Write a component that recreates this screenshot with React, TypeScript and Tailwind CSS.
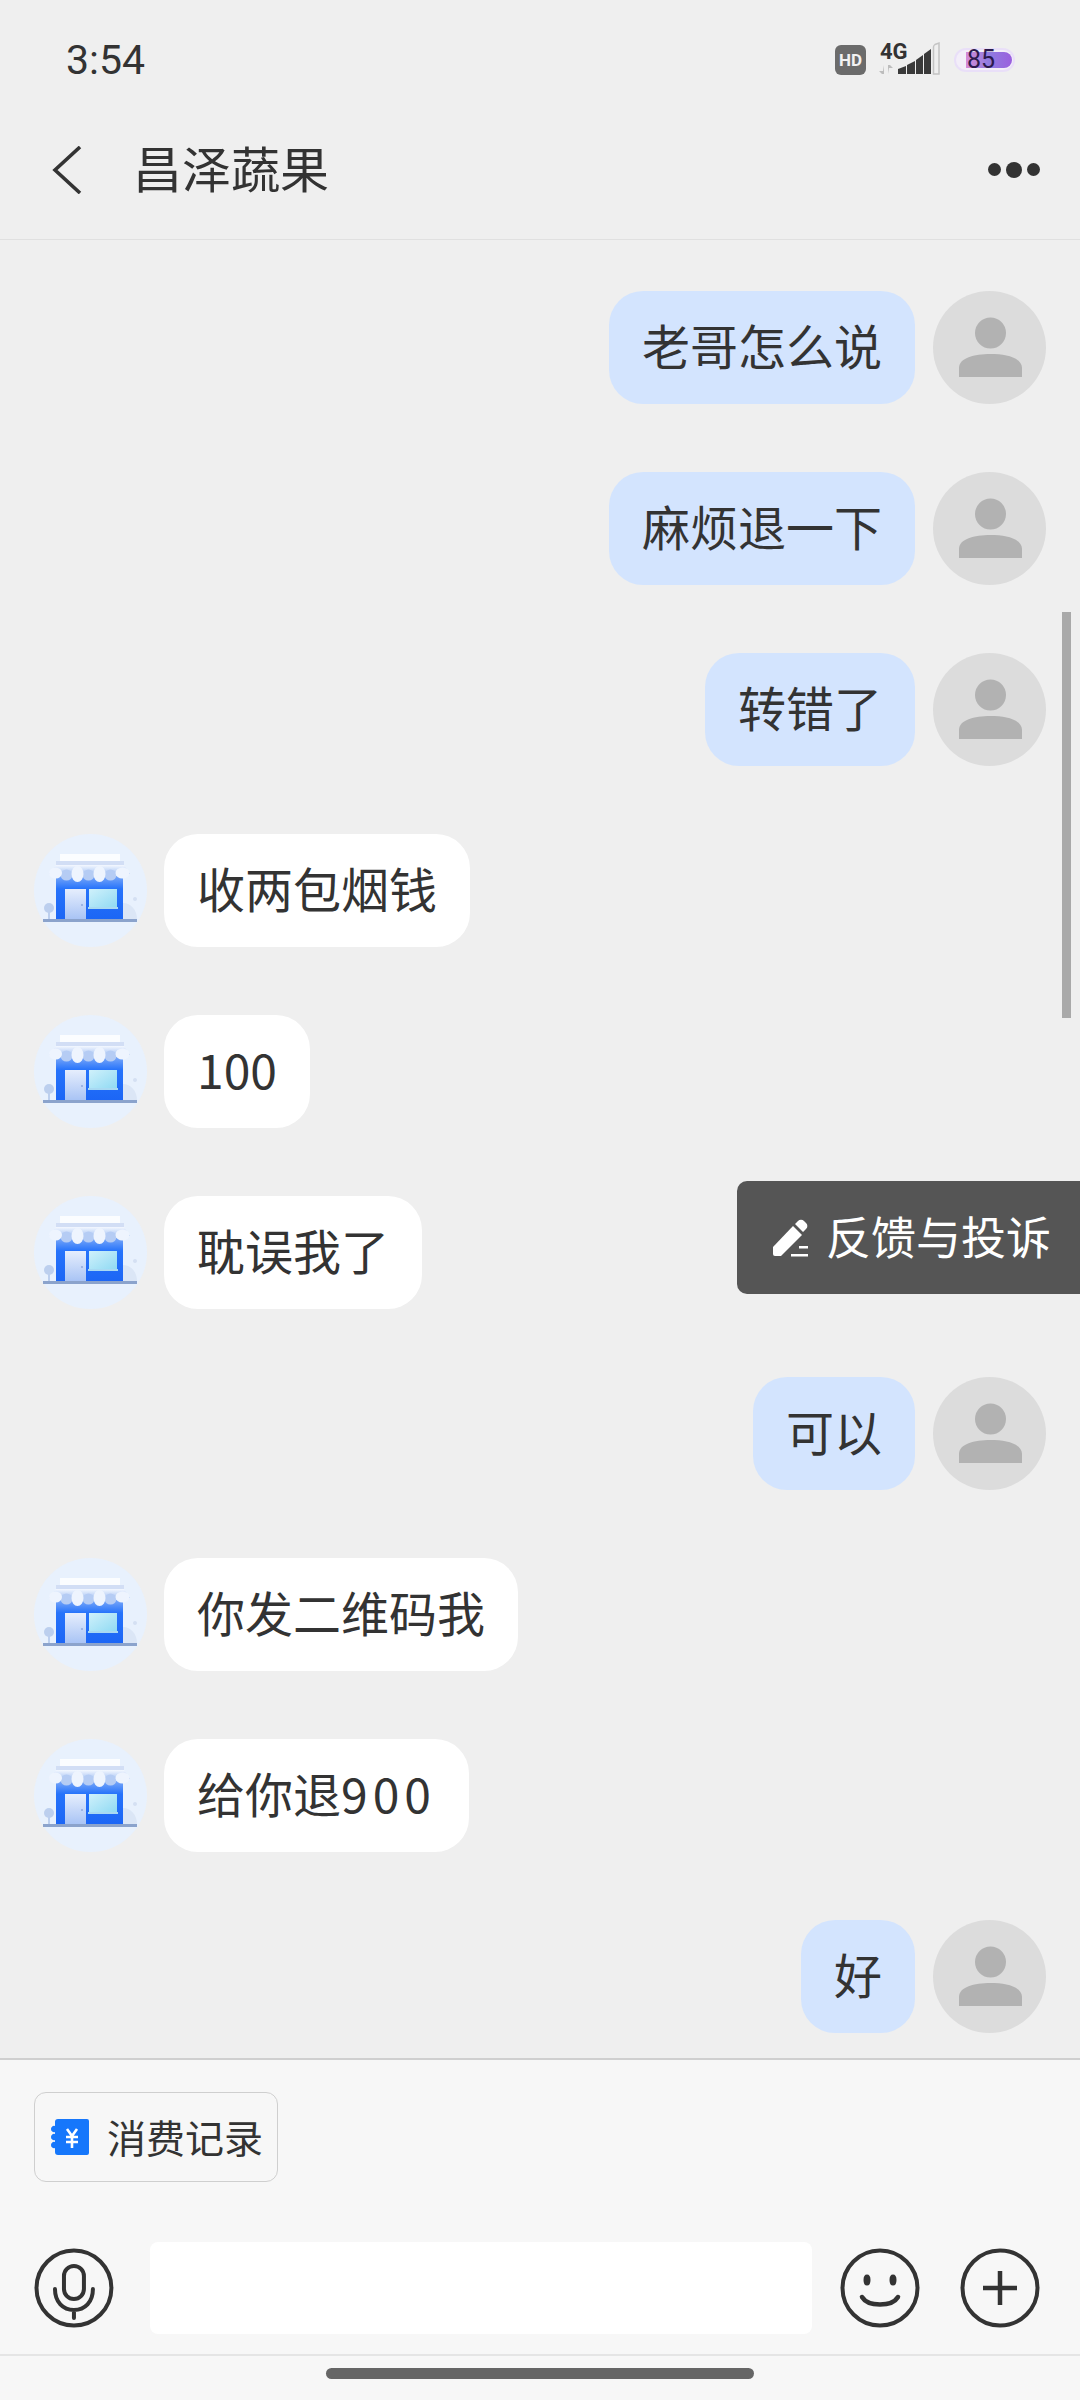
type Message = { from: 'me' | 'shop'; text: string; digits?: string }

const messages: Message[] = [
  { from: 'me', text: '老哥怎么说' },
  { from: 'me', text: '麻烦退一下' },
  { from: 'me', text: '转错了' },
  { from: 'shop', text: '收两包烟钱' },
  { from: 'shop', text: '100' },
  { from: 'shop', text: '耽误我了' },
  { from: 'me', text: '可以' },
  { from: 'shop', text: '你发二维码我' },
  { from: 'shop', text: '给你退', digits: '900' },
  { from: 'me', text: '好' },
]

function UserAvatar() {
  return (
    <svg viewBox="0 0 113 113" className="h-[113px] w-[113px] shrink-0">
      <circle cx="56.5" cy="56.5" r="56.5" fill="#dcdcdc" />
      <circle cx="57.5" cy="42" r="15.5" fill="#b2b2b2" />
      <path d="M26 86 V77 C26 67 41 63 57.5 63 C74 63 89 67 89 77 V86 Z" fill="#b2b2b2" />
    </svg>
  )
}

function ShopAvatar() {
  return (
    <svg viewBox="0 0 113 113" className="h-[113px] w-[113px] shrink-0">
      <defs>
        <linearGradient id="front" x1="0" y1="0" x2="0" y2="1">
          <stop offset="0" stopColor="#7aa8f8" />
          <stop offset="0.3" stopColor="#2673fb" />
          <stop offset="1" stopColor="#1c66f5" />
        </linearGradient>
        <linearGradient id="door" x1="0" y1="0" x2="0" y2="1">
          <stop offset="0" stopColor="#e6eefd" />
          <stop offset="1" stopColor="#a9c4f5" />
        </linearGradient>
        <linearGradient id="pane" x1="0" y1="0" x2="1" y2="1">
          <stop offset="0" stopColor="#d0f1fb" />
          <stop offset="1" stopColor="#90daf3" />
        </linearGradient>
        <linearGradient id="awning" x1="0" y1="0" x2="0" y2="1">
          <stop offset="0" stopColor="#f4f8ff" />
          <stop offset="1" stopColor="#a9c5f4" />
        </linearGradient>
      </defs>
      <circle cx="56.5" cy="56.5" r="56.5" fill="#e8f1fd" />
      <path d="M89 85 V69 C97 69 103 76 103 85 Z" fill="#dbe6f6" />
      <circle cx="101" cy="65" r="2" fill="#d4e0f3" />
      <circle cx="15" cy="74" r="5" fill="#bccfee" />
      <rect x="14" y="76" width="2" height="9" fill="#bccfee" />
      <rect x="22" y="42" width="67" height="43" fill="url(#front)" />
      <rect x="31" y="55" width="21" height="30" fill="url(#door)" />
      <circle cx="48" cy="71" r="1" fill="#8fa9dc" />
      <rect x="55" y="55" width="28" height="18" fill="url(#pane)" />
      <rect x="54" y="73" width="30" height="2" fill="#a8d9f2" />
      <rect x="26" y="20" width="60" height="7" fill="#fbfdff" />
      <rect x="22" y="27" width="68" height="4" fill="#d2def5" />
      {/* scalloped awning: blue lobes behind, white lobes in front */}
      <path d="M22 31 H90 L96 40 H15 Z" fill="url(#awning)" />
      <ellipse cx="32.5" cy="41" rx="6" ry="5.5" fill="#b5ccf4" />
      <ellipse cx="54.5" cy="41" rx="6" ry="5.5" fill="#b5ccf4" />
      <ellipse cx="76.5" cy="41" rx="6" ry="5.5" fill="#b5ccf4" />
      <ellipse cx="21.5" cy="39" rx="6.5" ry="5.5" fill="#eef4fe" />
      <ellipse cx="43.5" cy="40" rx="6" ry="8" fill="#eef4fe" />
      <ellipse cx="65.5" cy="40" rx="6" ry="8" fill="#eef4fe" />
      <ellipse cx="88.5" cy="39" rx="7" ry="5.5" fill="#eef4fe" />
      <rect x="9" y="85" width="94" height="3" fill="#8ba3cc" />
    </svg>
  )
}

function Bubble({ from, text, digits }: Message) {
  const tone = from === 'me' ? 'bg-[#d3e4fe]' : 'bg-white'
  return (
    <div className={`flex h-[113px] items-center rounded-[34px] px-[33px] pb-[8px] text-[48px] leading-none text-[#333] ${tone}`}>
      {text}
      {digits && <span className="tracking-[5px]">{digits}</span>}
    </div>
  )
}

function StatusIcons() {
  return (
    <div className="flex items-center">
      <div className="flex h-[30px] w-[31px] items-center justify-center rounded-[6px] bg-[#6b6b6b] font-['Roboto',sans-serif] text-[17px] font-bold leading-none text-[#f2f2f2]">
        HD
      </div>
      <div className="relative ml-[13px] h-[34px] w-[62px]">
        <span className="absolute left-[1px] top-[-2px] font-['Roboto',sans-serif] text-[22px] font-bold leading-[22px] text-[#333]">4G</span>
        <svg viewBox="0 0 62 34" className="absolute inset-0 h-[34px] w-[62px] overflow-visible">
          <path d="M5 22 V31 H3 L0 28 H4 Z M9 31 V22 H11 L14 25 H10 Z" fill="#bdbdbd" />
          <path d="M19 31 V26 L27 23 V31 Z" fill="#3a3a3a" />
          <path d="M28 31 V22 L36 18 V31 Z" fill="#3a3a3a" />
          <path d="M37 31 V17 L44 12 V31 Z" fill="#3a3a3a" />
          <path d="M45 31 V11 L52 6 V31 Z" fill="#3a3a3a" />
          <path d="M54.5 31 V4 Q54.5 2.5 56 1.5 L60 0 V31 Z" fill="#efefef" stroke="#c4c4c4" strokeWidth="1.5" />
        </svg>
      </div>
      <div className="relative ml-[13px] h-[24px] w-[61px] rounded-full border-[2px] border-[#e9dff8] bg-[#f3eef9]">
        <div className="absolute bottom-[2px] left-[10px] top-[2px] w-[46px] rounded-r-full bg-gradient-to-r from-[#d98bd6] via-[#8f7be0] to-[#9a5fde]" />
        <span className="absolute left-[11px] top-[-2px] font-['Roboto',sans-serif] text-[25px] leading-[24px] text-[#2c1a4d]">85</span>
      </div>
    </div>
  )
}

function FeedbackTab() {
  return (
    <div className="absolute right-0 top-[941px] flex h-[113px] w-[343px] items-center rounded-l-[10px] bg-[#555] pl-[34px] text-white">
      <svg viewBox="0 0 38 38" className="h-[38px] w-[38px]" fill="#fff">
        <path d="M2 28 L22 7 L31 16 L10 37 H4 a2 2 0 0 1 -2 -2 Z" />
        <path d="M24 5 L27 2 a4 4 0 0 1 6 0 l2 2 a4 4 0 0 1 0 6 l-3 3 Z" />
        <rect x="20" y="35" width="17" height="2.5" />
        <rect x="28" y="27" width="9" height="2.5" />
      </svg>
      <span className="ml-[17px] pb-[4px] text-[45px] leading-none">反馈与投诉</span>
    </div>
  )
}

function RecordIcon() {
  return (
    <svg viewBox="0 0 40 38" className="h-[38px] w-[40px]">
      <path d="M5 4 a3 3 0 0 1 3 -3 H37 a2 2 0 0 1 2 2 V35 a2 2 0 0 1 -2 2 H8 a3 3 0 0 1 -3 -3 V30 a3 3 0 0 1 -4 -3 a3 3 0 0 1 4 -3 V22 a3 3 0 0 1 -4 -3 a3 3 0 0 1 4 -3 V14 a3 3 0 0 1 -4 -3 a3 3 0 0 1 4 -3 Z" fill="#1677fb" />
      <path d="M17 11 L22 18 L27 11 M16 19 H28 M16 24 H28 M22 18 V30" fill="none" stroke="#fff" strokeWidth="2.6" />
    </svg>
  )
}

function MicIcon() {
  return (
    <svg viewBox="0 0 80 80" className="h-[80px] w-[80px]" fill="none" stroke="#333" strokeWidth="4">
      <circle cx="40" cy="40" r="37.5" />
      <rect x="30" y="18" width="20" height="33" rx="10" />
      <path d="M21 41 C21 54 29 62 40 62 C51 62 59 54 59 41 M40 62 V70" strokeLinecap="round" />
    </svg>
  )
}

function SmileIcon() {
  return (
    <svg viewBox="0 0 80 80" className="h-[80px] w-[80px]" fill="none" stroke="#333" strokeWidth="4">
      <circle cx="40" cy="40" r="37.5" />
      <ellipse cx="27" cy="32" rx="1.5" ry="3.5" fill="#333" />
      <ellipse cx="53" cy="32" rx="1.5" ry="3.5" fill="#333" />
      <path d="M22 49 C28 59 52 59 58 49" strokeWidth="4.5" strokeLinecap="round" />
    </svg>
  )
}

function PlusIcon() {
  return (
    <svg viewBox="0 0 80 80" className="h-[80px] w-[80px]" fill="none" stroke="#333" strokeWidth="4">
      <circle cx="40" cy="40" r="37.5" />
      <path d="M23 40 H57 M40 23 V57" strokeWidth="4.5" />
    </svg>
  )
}

export default function App() {
  return (
    <div className="flex h-[2400px] w-[1080px] flex-col overflow-hidden bg-[#efefef] font-['Noto_Sans_CJK_SC',sans-serif] text-[#333]">
      <div className="flex h-[120px] items-center justify-between pl-[66px] pr-[65px]">
        <span className="font-['Roboto',sans-serif] text-[41px] font-normal leading-none text-[#333]">3:54</span>
        <StatusIcons />
      </div>

      <header className="flex h-[120px] items-center justify-between border-b border-[#e0e0e0] pb-[20px] pl-[52px] pr-[40px]">
        <div className="flex items-center">
          <svg viewBox="0 0 30 48" className="h-[48px] w-[30px]" fill="none" stroke="#333" strokeWidth="3.6">
            <path d="M28 1 L3 24 L28 47" />
          </svg>
          <h1 className="ml-[51px] pb-[6px] text-[49px] font-normal leading-none">昌泽蔬果</h1>
        </div>
        <div className="flex items-center gap-[5px]">
          <span className="h-[13px] w-[13px] rounded-full bg-[#333]" />
          <span className="h-[16px] w-[16px] rounded-full bg-[#333]" />
          <span className="h-[13px] w-[13px] rounded-full bg-[#333]" />
        </div>
      </header>

      <main className="relative flex flex-1 flex-col gap-[68px] overflow-hidden pl-[34px] pr-[34px] pt-[51px]">
        {messages.map((m, i) =>
          m.from === 'me' ? (
            <div key={i} className="flex items-center justify-end gap-[18px]">
              <Bubble {...m} />
              <UserAvatar />
            </div>
          ) : (
            <div key={i} className="flex items-center gap-[17px]">
              <ShopAvatar />
              <Bubble {...m} />
            </div>
          ),
        )}
        <div className="absolute right-[9px] top-[372px] h-[406px] w-[9px] bg-[#a9a9a9]" />
        <FeedbackTab />
      </main>

      <section className="border-t-2 border-[#cfcfcf] bg-[#f7f7f7]">
        <div className="px-[34px] pt-[32px]">
          <button className="flex h-[90px] w-[244px] items-center rounded-[12px] border border-[#cfcfcf] pl-[15px]">
            <RecordIcon />
            <span className="ml-[17px] pb-[2px] text-[39px] leading-none text-[#333]">消费记录</span>
          </button>
        </div>
        <div className="mt-[60px] flex h-[92px] items-center pl-[34px] pr-[40px]">
          <MicIcon />
          <div className="ml-[36px] h-[92px] w-[663px] rounded-[8px] bg-white" />
          <div className="ml-[28px]"><SmileIcon /></div>
          <div className="ml-[40px]"><PlusIcon /></div>
        </div>
        <div className="mt-[20px] flex h-[46px] justify-center border-t-2 border-[#e5e5e5] pt-[12px]">
          <div className="h-[11px] w-[428px] rounded-full bg-[#666]" />
        </div>
      </section>
    </div>
  )
}
